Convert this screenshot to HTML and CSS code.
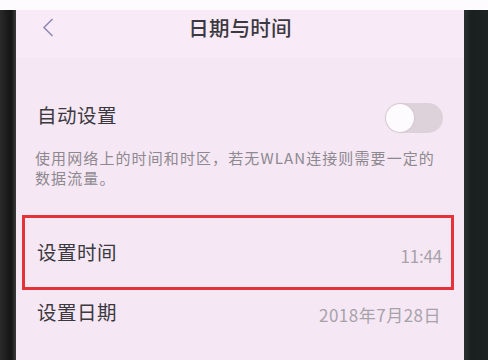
FILE: index.html
```html
<!DOCTYPE html>
<html lang="zh-CN">
<head>
<meta charset="utf-8">
<link rel="stylesheet" href="styles.css">
</head>
<body>
<div class="topstrip"></div>
<div class="device">
  <div class="bezel-left"></div>
  <main class="screen">
    <header class="header">
      <span class="back">
        <svg width="12" height="19" viewBox="0 0 12 19"><path d="M10.5 1 L2 9.5 L10.5 18" fill="none" stroke="#8b89b6" stroke-width="1.5"/></svg>
      </span>
      <h1 class="title">日期与时间</h1>
      <span></span>
    </header>
    <section class="row row-auto">
      <span class="label">自动设置</span>
      <span class="toggle"><span class="knob"></span></span>
    </section>
    <p class="desc">使用网络上的时间和时区，若无WLAN连接则需要一定的数据流量。</p>
    <section class="row row-time">
      <span class="label">设置时间</span>
      <span class="value value-time">11:44</span>
    </section>
    <section class="row row-date">
      <span class="label">设置日期</span>
      <span class="value value-date">2018年7月28日</span>
    </section>
    <div class="highlight"></div>
  </main>
  <div class="bezel-right"></div>
</div>
</body>
</html>
```
FILE: styles.css
```css
* { box-sizing: border-box; margin: 0; padding: 0; }
html, body { width: 488px; height: 360px; overflow: hidden; }
body {
  background: #fff;
  font-family: "Noto Sans CJK SC", "Noto Sans", sans-serif;
  display: flex;
  flex-direction: column;
}
.topstrip { height: 10px; background: #fdfbfd; flex: none; }
.device { flex: 1; display: flex; }
.bezel-left {
  width: 16px;
  background: linear-gradient(90deg, #2a2a2a, #141414 70%, #3a3a3a);
}
.bezel-right {
  width: 24px;
  background: linear-gradient(90deg, #2b3131, #1a2020 30%, #1d2323);
}
.screen {
  flex: 1;
  position: relative;
  background: #f6e7f4;
  display: flex;
  flex-direction: column;
}
.header {
  height: 48px;
  display: grid;
  grid-template-columns: 1fr auto 1fr;
  align-items: start;
  padding-top: 2px;
  background: #f8eaf6;
}
.back { padding-left: 26px; height: 30px; display: flex; align-items: center; }
.title {
  font-size: 20.5px;
  font-weight: 500;
  line-height: 30px;
  color: #3b393f;
  letter-spacing: 0.2px;
}
.row {
  display: flex;
  align-items: center;
  justify-content: space-between;
  padding: 0 21px 0 21px;
}
.label {
  font-size: 19.5px;
  color: #3b3940;
  letter-spacing: 0.5px;
}
.row-auto { margin-top: 40px; height: 40px; }
.row-auto .label { margin-top: -8px; }
.toggle {
  width: 58px;
  height: 30px;
  border-radius: 15px;
  background: #ddd2da;
  display: flex;
  align-items: center;
  padding-left: 1px;
}
.knob {
  width: 28px;
  height: 28px;
  border-radius: 50%;
  background: #fdfbfd;
  box-shadow: 0 0 2px rgba(0,0,0,0.15);
}
.desc {
  margin-top: 10px;
  padding: 0 22px 0 19px;
  font-size: 15px;
  line-height: 20px;
  letter-spacing: 1.1px;
  color: #8d8990;
}
.row-time { margin-top: 27px; height: 75px; }
.row-time .label { margin-top: -3px; }
.value {
  font-size: 17px;
  color: #a6a2a9;
  margin-top: 6px;
  letter-spacing: -0.2px;
}
.value-time { margin-right: 1px; }
.value-date { letter-spacing: 0.5px; margin-right: 2px; }
.row-date { height: 42px; }
.highlight {
  position: absolute;
  left: 6px;
  top: 205px;
  width: 432px;
  height: 75px;
  border: 3px solid #e63339;
}
```
